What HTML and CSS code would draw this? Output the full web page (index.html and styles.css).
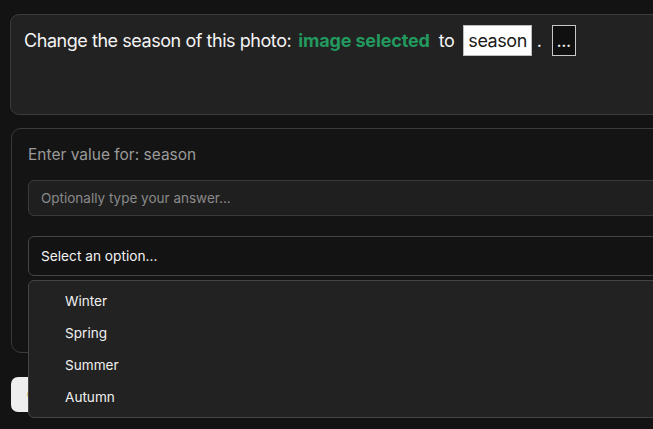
FILE: index.html
```html
<!DOCTYPE html>
<html>
<head>
<meta charset="utf-8">
<link rel="stylesheet" href="styles.css">
</head>
<body>
<div class="page">
  <div class="prompt-card">
    <div class="prompt-line">
      <span>Change the season of this photo:</span>
      <span class="tag">image selected</span>
      <span>to</span>
      <span class="slot">season</span>
      <span class="dot">.</span>
      <span class="more">...</span>
    </div>
  </div>
  <div class="form-card">
    <div class="label">Enter value for: season</div>
    <div class="input">Optionally type your answer...</div>
    <div class="select-wrap">
      <div class="select">Select an option...</div>
      <div class="menu">
        <div class="item">Winter</div>
        <div class="item">Spring</div>
        <div class="item">Summer</div>
        <div class="item">Autumn</div>
      </div>
    </div>
  </div>
  <div class="actions">
    <div class="btn">Continue</div>
  </div>
</div>
</body>
</html>
```
FILE: styles.css
```css
html, body {
  margin: 0;
  padding: 0;
  background: #131313;
  overflow: hidden;
  height: 429px;
}
body {
  font-family: Inter, "Noto Sans", sans-serif;
  color: #f2f2f2;
}
.page {
  width: 760px;
  padding: 14px 0 0 10px;
  display: flex;
  flex-direction: column;
}
.prompt-card {
  height: 101px;
  box-sizing: border-box;
  background: #222222;
  border: 1px solid #3b3b3b;
  border-radius: 9px;
  padding: 10px 13px;
}
.prompt-line {
  display: flex;
  align-items: center;
  font-size: 18px;
  letter-spacing: -0.45px;
  color: #f4f4f4;
  gap: 8px;
}
.tag {
  color: #22995e;
  font-weight: 700;
  letter-spacing: -0.15px;
  margin-left: -1px;
  margin-right: 1px;
}
.slot {
  background: #ffffff;
  color: #1a1a1a;
  border: 1px solid #bdbdbd;
  height: 31px;
  box-sizing: border-box;
  padding: 0 4px;
  display: flex;
  align-items: center;
  margin-left: 1px;
}
.dot {
  margin-left: -3px;
}
.more {
  background: #101010;
  color: #f4f4f4;
  border: 1px solid #c8c8c8;
  height: 31px;
  width: 24px;
  box-sizing: border-box;
  display: flex;
  align-items: center;
  justify-content: center;
  margin-left: 2px;
}
.form-card {
  margin-top: 13px;
  margin-left: 1px;
  height: 225px;
  box-sizing: border-box;
  background: #141414;
  border: 1px solid #3b3b3b;
  border-radius: 10px;
  padding: 17px 16px;
  display: flex;
  flex-direction: column;
}
.label {
  font-size: 15.5px;
  color: #9a9a9a;
  line-height: 18px;
}
.input {
  margin-top: 16px;
  height: 36px;
  box-sizing: border-box;
  background: #1f1f1f;
  border: 1px solid #3a3a3a;
  border-radius: 6px;
  padding: 0 12px;
  display: flex;
  align-items: center;
  font-size: 13.5px;
  color: #8a8a8a;
}
.select-wrap {
  position: relative;
  margin-top: 20px;
}
.select {
  height: 40px;
  box-sizing: border-box;
  background: #131313;
  border: 1px solid #454545;
  border-radius: 6px;
  padding: 0 12px;
  display: flex;
  align-items: center;
  font-size: 13.7px;
  color: #f2f2f2;
}
.menu {
  position: absolute;
  left: 0;
  right: 0;
  top: 44px;
  height: 138px;
  box-sizing: border-box;
  background: #222222;
  border: 1px solid #444444;
  border-radius: 6px;
  padding: 4px 0;
  z-index: 5;
}
.item {
  height: 32px;
  display: flex;
  align-items: center;
  padding-left: 36px;
  font-size: 13.6px;
  color: #f0f0f0;
}
.actions {
  margin-top: 24px;
  display: flex;
}
.btn {
  margin-left: 1px;
  height: 35px;
  box-sizing: border-box;
  background: #eeeeee;
  color: #111;
  border-radius: 7px;
  padding: 0 16px;
  display: flex;
  align-items: center;
  font-size: 14px;
  font-weight: 500;
}
```
